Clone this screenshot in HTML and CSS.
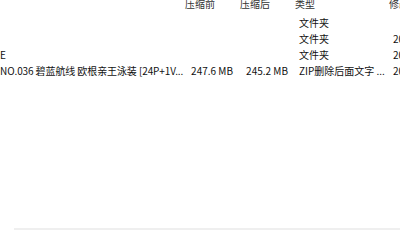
FILE: index.html
```html
<!DOCTYPE html>
<html lang="zh-CN">
<head>
<meta charset="utf-8">
<link rel="stylesheet" href="styles.css">
</head>
<body>
<div class="view">
  <div class="list">
    <div class="row header">
      <div class="cell name"></div>
      <div class="cell h">压缩前</div>
      <div class="cell h">压缩后</div>
      <div class="cell h">类型</div>
      <div class="cell h">修改</div>
    </div>
    <div class="rows">
      <div class="row">
        <div class="cell name"></div>
        <div class="cell size"></div>
        <div class="cell size"></div>
        <div class="cell type">文件夹</div>
        <div class="cell date"></div>
      </div>
      <div class="row">
        <div class="cell name"></div>
        <div class="cell size"></div>
        <div class="cell size"></div>
        <div class="cell type">文件夹</div>
        <div class="cell date">2020-</div>
      </div>
      <div class="row">
        <div class="cell name">E</div>
        <div class="cell size"></div>
        <div class="cell size"></div>
        <div class="cell type">文件夹</div>
        <div class="cell date">2020-</div>
      </div>
      <div class="row">
        <div class="cell name">NO.036 碧蓝航线 欧根亲王泳装 [24P+1V...</div>
        <div class="cell size">247.6 MB</div>
        <div class="cell size">245.2 MB</div>
        <div class="cell type">ZIP删除后面文字 ...</div>
        <div class="cell date">2020-</div>
      </div>
    </div>
  </div>
  <div class="footer"></div>
</div>
</body>
</html>
```

FILE: styles.css
```css
html, body {
  margin: 0;
  padding: 0;
  background: #ffffff;
}

.view {
  width: 400px;
  height: 230px;
  overflow: hidden;
  display: flex;
  flex-direction: column;
  font-family: "Noto Sans CJK SC", "Noto Sans", sans-serif;
  font-size: 10px;
  color: #111111;
}

.list {
  flex: 1;
}

.row {
  display: grid;
  grid-template-columns: 183px 55px 55px 94px 100px;
  height: 16px;
  line-height: 16px;
  white-space: nowrap;
}

.header {
  height: 9px;
  line-height: 8px;
  color: #333333;
}

.rows {
  padding-top: 6px;
}

.cell {
  overflow: hidden;
}

.h {
  padding-left: 2px;
}

.name {
  overflow: visible;
  letter-spacing: -0.1px;
}

.size {
  text-align: right;
  padding-right: 5px;
}

.type {
  padding-left: 6px;
}

.date {
  padding-left: 6px;
}

.footer {
  height: 2px;
  margin-left: 14px;
  background: #efefef;
}
```
